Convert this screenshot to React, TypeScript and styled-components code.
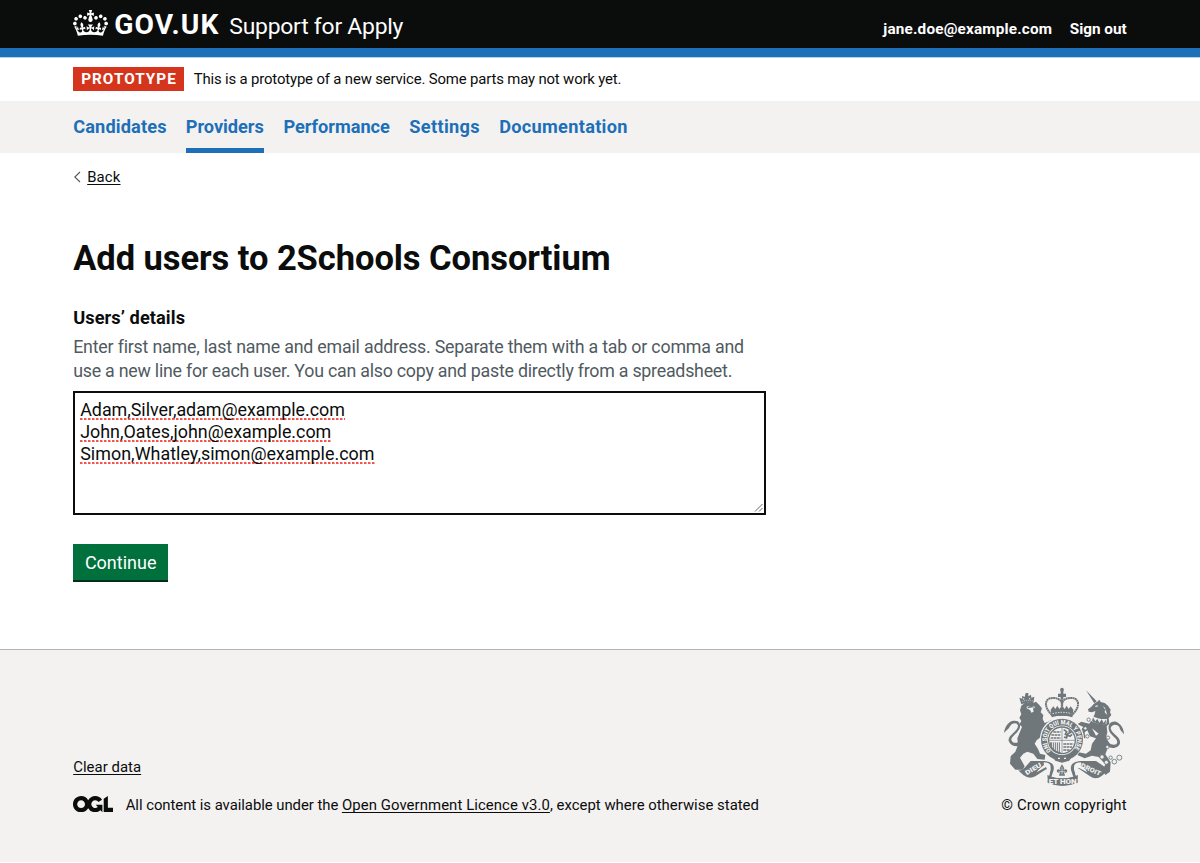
import React from "react";
import styled, { createGlobalStyle } from "styled-components";

const ink = "#0b0c0c";
const blue = "#1d70b8";
const grey = "#f3f2f1";
const secondary = "#505a5f";
const arms = "#6f777b";

const GlobalStyle = createGlobalStyle`
  *, *::before, *::after { box-sizing: border-box; }
  body {
    margin: 0;
    background: #fff;
    color: ${ink};
    font-family: Roboto, "Liberation Sans", sans-serif;
  }
`;

const Container = styled.div`
  width: 1053.5px;
  margin-left: 73.2px;
`;

/* Tracking differs slightly between strings, so it is a prop of the text. */
const Text = styled.span<{ $track?: number }>`
  letter-spacing: ${(p) => p.$track ?? 0}px;
`;

const Header = styled.header`
  height: 57px;
  background: ${ink};
  border-bottom: 9px solid ${blue};
  box-shadow: 0 1px 0 #b4d0e8;
  color: #fff;
`;

const HeaderRow = styled(Container)`
  display: flex;
  align-items: baseline;
  padding-top: 5px;
`;

const Crown = styled.svg`
  align-self: flex-start;
  width: 35px;
  height: 26px;
  margin: 5px 6px 0 0;
  fill: #fff;
`;

const Logotype = styled.span`
  font-size: 28.2px;
  font-weight: 700;
  line-height: 40px;
  letter-spacing: 1.15px;
  margin-right: 9.8px;
`;

const ServiceName = styled.span`
  flex: 1;
  font-size: 22.9px;
  letter-spacing: -0.24px;
`;

const AccountLink = styled.a`
  color: #fff;
  font-size: 15.3px;
  font-weight: 700;
  margin-left: 17.5px;
`;

const PhaseBanner = styled.div`
  height: 44px;
`;

const PhaseRow = styled(Container)`
  display: flex;
  align-items: center;
  padding-top: 10px;
  font-size: 14.9px;
  line-height: 24px;
`;

const Tag = styled.strong`
  width: 111px;
  height: 24px;
  margin-right: 9.5px;
  padding-left: 8px;
  background: #d4351c;
  color: #fff;
  font-size: 15.3px;
  letter-spacing: 1px;
`;

const PrimaryNav = styled.nav`
  height: 52px;
  background: ${grey};
`;

const NavList = styled(Container)`
  display: flex;
  gap: 19.3px;
`;

const NavLink = styled.a<{ $width: number; $active?: boolean; $track?: number }>`
  width: ${(p) => p.$width}px;
  height: 52px;
  border-bottom: ${(p) => (p.$active ? `5px solid ${blue}` : "0")};
  color: ${blue};
  font-size: 18.2px;
  font-weight: 700;
  line-height: 52px;
  white-space: nowrap;
  letter-spacing: ${(p) => p.$track ?? 0}px;
`;

const BackLink = styled.a`
  display: flex;
  align-items: center;
  gap: 6px;
  margin-top: 14px;
  height: 20px;
  font-size: 14.9px;
  line-height: 20px;
`;

const Underlined = styled.span<{ $track?: number }>`
  text-decoration: underline;
  text-decoration-thickness: 1px;
  text-underline-offset: 2px;
  text-decoration-skip-ink: none;
  letter-spacing: ${(p) => p.$track ?? 0}px;
`;

const Main = styled.main`
  height: 496px;
  padding-top: 0.1px;
`;

const Title = styled.h1`
  margin: 51px 0 0;
  font-size: 34.5px;
  line-height: 40px;
  letter-spacing: -0.06px;
`;

const Label = styled.label`
  display: block;
  margin-top: 28px;
  color: ${ink};
  font-size: 18.2px;
  font-weight: 700;
  line-height: 24px;
  letter-spacing: 0.08px;
`;

const Hint = styled.div`
  margin-top: 5px;
  color: ${secondary};
  font-size: 17.8px;
  line-height: 24px;
`;

const HintLine = styled.div<{ $track: number }>`
  white-space: nowrap;
  letter-spacing: ${(p) => p.$track}px;
`;

const TextBox = styled.div`
  position: relative;
  width: 693px;
  height: 124px;
  margin-top: 8px;
  padding: 5px;
  border: 2px solid ${ink};
  background: #fff;
  font-size: 17.9px;
  line-height: 22px;
`;

const Entry = styled.div`
  height: 22px;
  white-space: nowrap;
`;

const Misspelt = styled.span<{ $track: number }>`
  display: inline-block;
  height: 22px;
  line-height: 24px;
  letter-spacing: ${(p) => p.$track}px;
  background: radial-gradient(circle at 1.2px 1.2px, #f4534e 1.1px, #f4534e66 1.5px, transparent 1.8px) 0 100% / 4px 2.6px repeat-x;
`;

const ResizeGrip = styled.svg`
  position: absolute;
  right: 1px;
  bottom: 1px;
  width: 9px;
  height: 9px;
  stroke: #6b6b6b;
  stroke-width: 1;
`;

const Button = styled.button`
  display: block;
  width: 95px;
  height: 36px;
  margin: 29px 0 0;
  padding: 0;
  border: 0;
  background: #00703c;
  box-shadow: 0 2px 0 #002d18;
  color: #fff;
  font-family: inherit;
  font-size: 18px;
  line-height: 37px;
`;

const Footer = styled.footer`
  height: 213px;
  border-top: 1px solid #b1b4b6;
  background: ${grey};
  font-size: 14.9px;
  line-height: 20px;
`;

const FooterRow = styled(Container)`
  display: flex;
  justify-content: space-between;
  align-items: flex-end;
  height: 165px;
`;

const FooterMeta = styled.div`
  display: flex;
  flex-direction: column;
  gap: 18px;
`;

const Licence = styled.div`
  display: flex;
  align-items: center;
  white-space: pre;
`;

const OglLogo = styled.svg`
  width: 40px;
  height: 16.3px;
  margin: 0 12.5px 2px 0;
  fill: ${ink};
`;

const Copyright = styled.div`
  display: flex;
  flex-direction: column;
  align-items: flex-end;
  gap: 9px;
`;

const ArmsSvg = styled.svg`
  width: 124px;
  height: 99px;
  margin-right: 1px;
`;

const BackChevron = () => (
  <svg width="8" height="12" viewBox="0 0 8 12" fill="none" stroke={secondary} strokeWidth="1.1">
    <path d="M7 1L1.8 6L7 11" />
  </svg>
);

const CrownIcon = () => (
  <Crown viewBox="0 0 132 97" preserveAspectRatio="none">
    <path d="M25 30.2c3.5 1.5 7.7-.2 9.1-3.7 1.5-3.6-.2-7.8-3.9-9.2-3.6-1.4-7.6.3-9.1 3.9-1.4 3.5.3 7.5 3.9 9zM9 39.5c3.6 1.5 7.8-.2 9.2-3.7 1.5-3.6-.2-7.8-3.9-9.1-3.6-1.5-7.6.2-9.1 3.8-1.4 3.5.3 7.5 3.8 9zM4.4 57.2c3.5 1.5 7.7-.2 9.1-3.8 1.5-3.6-.2-7.7-3.9-9.1-3.5-1.5-7.6.3-9.1 3.8-1.4 3.5.3 7.6 3.9 9.1zm38.3-21.4c3.5 1.5 7.7-.2 9.1-3.8 1.5-3.6-.2-7.7-3.9-9.1-3.6-1.5-7.6.3-9.1 3.8-1.3 3.6.4 7.7 3.9 9.1zm64.4-5.6c-3.6 1.5-7.8-.2-9.1-3.7-1.5-3.6.2-7.8 3.8-9.2 3.6-1.4 7.7.3 9.2 3.9 1.3 3.5-.4 7.5-3.9 9zm15.9 9.3c-3.6 1.5-7.7-.2-9.1-3.7-1.5-3.6.2-7.8 3.7-9.1 3.6-1.5 7.7.2 9.2 3.8 1.5 3.5-.3 7.5-3.8 9zm4.7 17.7c-3.6 1.5-7.8-.2-9.2-3.8-1.5-3.6.2-7.7 3.9-9.1 3.6-1.5 7.7.3 9.2 3.8 1.3 3.5-.4 7.6-3.9 9.1zM89.3 35.8c-3.6 1.5-7.8-.2-9.2-3.8-1.4-3.6.2-7.7 3.9-9.1 3.6-1.5 7.7.3 9.2 3.8 1.4 3.6-.3 7.7-3.9 9.1zM69.7 17.7l8.9 4.7V9.3l-8.9 2.8c-.2-.3-.5-.6-.9-.9L72.4 0H59.6l3.5 11.2c-.3.3-.6.5-.9.9l-8.8-2.8v13.1l8.8-4.7c.3.3.6.7.9.9l-5 15.4v.1c-.2.8-.4 1.6-.4 2.4 0 4.1 3.1 7.5 7 8.1h.2c.3 0 .7.1 1 .1.4 0 .7 0 1-.1h.2c4-.6 7.1-4.1 7.1-8.1 0-.8-.1-1.7-.4-2.4V34l-5.1-15.4c.4-.2.7-.6 1-.9zM66 92.8c16.9 0 32.8 1.1 47.1 3.2 4-16.9 8.9-26.7 14-33.5l-9.6-3.4c1 4.9 1.1 7.2 0 10.2-1.5-1.4-3-4.3-4.2-8.7L108.6 76c2.8-2 5-3.2 7.5-3.3-4.4 9.4-10 11.9-13.6 11.2-4.3-.8-6.3-4.6-5.6-7.9 1-4.7 5.7-5.9 8-.5 4.3-8.7-3-11.4-7.6-8.8 7.1-7.2 7.9-13.5 2.1-21.1-8 6.1-8.1 12.3-4.5 20.8-4.7-5.4-12.1-2.5-9.5 6.2 3.4-5.2 7.9-2 7.2 3.1-.6 4.3-6.4 7.8-13.5 7.2-10.3-.9-10.9-8-11.2-13.8 2.5-.5 7.1 1.8 11 7.3L80.2 60c-4.1 4.4-8 5.3-12.3 5.4 1.4-4.4 8-11.6 8-11.6H55.5s6.4 7.2 7.9 11.6c-4.2-.1-8-1-12.3-5.4l1.4 16.4c3.9-5.5 8.5-7.7 10.9-7.3-.3 5.8-.9 12.8-11.1 13.8-7.2.6-12.9-2.9-13.5-7.2-.7-5 3.8-8.3 7.1-3.1 2.7-8.7-4.6-11.6-9.4-6.2 3.7-8.5 3.6-14.7-4.6-20.8-5.8 7.6-5 13.9 2.2 21.1-4.7-2.6-11.9.1-7.7 8.8 2.3-5.5 7.1-4.2 8.1.5.7 3.3-1.3 7.1-5.7 7.9-3.5.7-9-1.8-13.5-11.2 2.5.1 4.7 1.3 7.5 3.3l-4.7-15.4c-1.2 4.4-2.7 7.2-4.3 8.7-1.1-3-.9-5.3 0-10.2l-9.5 3.4c5 6.9 9.9 16.7 14 33.5 14.8-2.1 30.8-3.2 47.7-3.2z" />
  </Crown>
);

const RoyalArms = () => (
  <ArmsSvg viewBox="36 36 372 297" fill={arms} fontFamily="Roboto, sans-serif" fontWeight="900">
    {/* ribbon */}
    <path d="M84 286L100 300Q118 314 136 304L166 284Q182 276 178 300L172 322Q216 342 264 322L256 298Q250 276 268 282L300 304Q318 316 336 302L356 284L336 270L318 258L270 258Q236 262 244 288L250 306Q216 314 184 306L190 288Q198 262 164 258L122 258L104 278Q94 288 84 286Z" />
    <path d="M162 262Q186 262 182 284L178 300L168 276L140 292ZM272 262Q248 262 252 284L258 300L266 278L292 292Z" fill={grey} />
    <path d="M128 266L160 260L162 270L130 296L112 300L104 292ZM276 264L304 262L340 292L326 300L310 298L272 272Z" />
    {/* lion tail */}
    <path d="M100 210C80 218 62 214 56 198C52 180 84 170 84 152C82 142 66 142 60 154C56 164 48 166 42 174C44 158 52 144 66 138C82 134 92 142 90 156C88 172 64 182 64 194C66 206 82 206 98 196Z" />
    {/* lion */}
    <path d="M94 92L104 84L130 84L138 80L148 90L156 100L152 112L160 120L158 132L164 144L174 140L184 134L186 144L174 156L164 170L168 186L176 192L172 202L158 198L152 186L140 196L134 206L144 222L150 236L166 240L164 254L142 252L130 236L112 230L100 236L90 248L104 274L98 284L76 284L60 266L62 244L76 230L84 210L82 190L90 170L96 156L88 148L94 138L88 128L94 118L90 106Z" />
    <path d="M110 95Q116 91 121 98L124 98Q130 92 136 96L129 101L131 110L124 113L121 106L110 100ZM150 184L162 178L166 190L158 190Z" fill={grey} />
    <path d="M112 96L119 95L120 99L114 100ZM126 98L132 96L130 100Z" />
    {/* lion crown */}
    <path d="M94 88L88 68L97 71L96 62L104 66L107 54L115 54L115 64L123 59L124 68L133 65L130 86Q112 79 94 88Z" />
    <path d="M96 80Q112 73 128 78" stroke={grey} strokeWidth="2" fill="none" strokeDasharray="3 3" />
    <circle cx="101" cy="72" r="2" fill={grey} />
    <circle cx="119" cy="71" r="2" fill={grey} />
    {/* unicorn tail */}
    <path d="M352 214C370 226 392 214 390 200C388 182 364 176 362 160C364 148 380 146 388 156C390 166 396 170 402 178C402 160 392 146 378 140C362 138 354 148 356 162C358 180 382 188 382 202C380 212 366 212 354 202Z" />
    {/* unicorn horn, head and body */}
    <path d="M288 46L320 79L313 85Z" />
    <path d="M312 86L322 80L328 74L332 81L344 84L354 92L362 104L360 112L364 120L356 130L358 146L350 154L352 172L348 188L358 204L352 222L346 238L362 262L360 290L346 300L338 286L346 268L326 246L306 242L284 250L262 240L266 232L288 236L302 226L306 206L318 190L300 184L292 166L284 172L286 190L272 188L266 172L280 156L262 148L274 140L298 146L306 132L314 118L316 108L306 112L296 110L294 103L304 95Z" />
    <path d="M307 122Q324 134 351 132L349 147Q324 150 303 138Z" fill={grey} />
    <path d="M306 138L309 127L316 139L322 131L328 143L335 133L341 144L348 133L347 148Q324 150 306 138Z" />
    <path d="M315 93L323 91L324 94L317 96ZM338 92L346 100L344 112L352 120L348 108ZM306 160L326 176L318 182Z" fill={grey} />
    {/* chain */}
    <g fill={grey} stroke={arms} strokeWidth="2.6">
      <circle cx="296" cy="134" r="5" />
      <circle cx="286" cy="160" r="5" />
      <circle cx="292" cy="184" r="5" />
      <circle cx="354" cy="188" r="5" />
      <circle cx="352" cy="216" r="5" />
      <circle cx="336" cy="246" r="6.5" />
      <circle cx="349" cy="262" r="6" />
      <circle cx="362" cy="248" r="5" />
      <circle cx="373" cy="260" r="7" />
      <circle cx="388" cy="248" r="7.5" />
    </g>
    {/* crown over the shield */}
    <circle cx="216" cy="44" r="5.5" />
    <path d="M212 46H220V56H228V66H220V74H212V66H204V56H212Z" />
    <path d="M186 120C164 100 162 76 180 70C196 66 212 72 216 84C220 72 236 66 252 70C270 76 268 100 246 120Z" fill={grey} stroke={arms} strokeWidth="6" strokeDasharray="6 1" />
    <path d="M216 74V108" stroke={arms} strokeWidth="7" strokeDasharray="6 1" />
    <path d="M182 104L190 94L196 102L202 92L208 102L216 92L224 102L230 92L236 102L242 94L250 104L247 127Q216 116 185 127Z" />
    <path d="M188 116Q216 108 244 116" stroke={grey} strokeWidth="3" strokeDasharray="4 4" fill="none" />
    {/* garter */}
    <circle cx="216" cy="192" r="66" fill={grey} />
    <circle cx="216" cy="194" r="63" />
    <path id="garter" d="M184 227A46 46 0 1 1 248 227" fill="none" />
    <text fill={grey} fontSize="19">
      <textPath href="#garter" textLength="210" lengthAdjust="spacingAndGlyphs">ONI SOIT QUI MAL Y PENSE</textPath>
    </text>
    <circle cx="216" cy="196" r="44.5" fill={grey} />
    <circle cx="216" cy="196" r="40" fill="none" stroke={arms} strokeWidth="4" />
    <path d="M216 157V235M178 196H254" stroke={arms} strokeWidth="2" />
    <g stroke={arms} fill="none">
      <path d="M190 171H212M184 180H212M182 189H212M220 207H250M220 216H246M220 225H240" strokeWidth="5" strokeDasharray="8 1.5" />
      <path d="M221 164L230 170L226 178L240 184L246 178M236 166L242 172L234 176L228 190M222 186L232 190" strokeWidth="5" />
      <path d="M184 202V214M190 202V222M196 202V227M202 202V230M208 202V233" strokeWidth="3" />
      <path d="M182 202C180 216 190 230 212 234" strokeWidth="4" />
    </g>
    <path d="M186 244L216 240L246 244L238 257L216 263L196 257Z" />
    <path d="M204 250H210M222 250H228" stroke={grey} strokeWidth="4" />
    {/* fleur de lis */}
    <circle cx="216" cy="286" r="21" fill={grey} />
    <path d="M216 268L223 280L220 286Q230 278 232 288Q230 296 222 292L225 302H207L210 292Q202 296 200 288Q202 278 212 286L209 280Z" />
    <path d="M216 276V298M206 290H226" stroke={grey} strokeWidth="1.8" />
    {/* motto */}
    <path d="M172 300Q216 322 264 300L262 324Q216 340 174 324Z" />
    <text x="176" y="327" fill={grey} fontSize="21" textLength="84" lengthAdjust="spacingAndGlyphs">ET HON</text>
    <text transform="translate(110 301) rotate(-31)" fill={grey} fontSize="19" textLength="54" lengthAdjust="spacingAndGlyphs">DIEU</text>
    <text transform="translate(271 276) rotate(25)" fill={grey} fontSize="19" textLength="64" lengthAdjust="spacingAndGlyphs">DROIT</text>
  </ArmsSvg>
);

const navItems = [
  { label: "Candidates", width: 93.3, track: 0.13 },
  { label: "Providers", width: 78.3, track: -0.04, active: true },
  { label: "Performance", width: 106.7, track: -0.02 },
  { label: "Settings", width: 70.5, track: 0.3 },
  { label: "Documentation", width: 129, track: 0.29 },
];

const entries = [
  { text: "Adam,Silver,adam@example.com", track: -0.03 },
  { text: "John,Oates,john@example.com", track: -0.01 },
  { text: "Simon,Whatley,simon@example.com", track: 0.03 },
];

export default function App() {
  return (
    <>
      <GlobalStyle />
      <Header>
        <HeaderRow>
          <CrownIcon />
          <Logotype>GOV.UK</Logotype>
          <ServiceName>Support for Apply</ServiceName>
          <AccountLink><Text $track={0.18}>jane.doe@example.com</Text></AccountLink>
          <AccountLink>Sign out</AccountLink>
        </HeaderRow>
      </Header>
      <PhaseBanner>
        <PhaseRow>
          <Tag>PROTOTYPE</Tag>
          <Text $track={-0.15}>This is a prototype of a new service. Some parts may not work yet.</Text>
        </PhaseRow>
      </PhaseBanner>
      <PrimaryNav>
        <NavList>
          {navItems.map((item) => (
            <NavLink key={item.label} $width={item.width} $track={item.track} $active={item.active}>
              {item.label}
            </NavLink>
          ))}
        </NavList>
      </PrimaryNav>
      <Main>
        <Container>
          <BackLink>
            <BackChevron />
            <Underlined $track={0.15}>Back</Underlined>
          </BackLink>
          <Title>Add users to 2Schools Consortium</Title>
          <Label>Users’ details</Label>
          <Hint>
            <HintLine $track={-0.19}>Enter first name, last name and email address. Separate them with a tab or comma and</HintLine>
            <HintLine $track={-0.23}>use a new line for each user. You can also copy and paste directly from a spreadsheet.</HintLine>
          </Hint>
          <TextBox role="textbox" aria-multiline="true">
            {entries.map((entry) => (
              <Entry key={entry.text}>
                <Misspelt $track={entry.track}>{entry.text}</Misspelt>
              </Entry>
            ))}
            <ResizeGrip viewBox="0 0 9 9">
              <path d="M1 8.5L8.5 1M5 8.5L8.5 5" />
            </ResizeGrip>
          </TextBox>
          <Button>Continue</Button>
        </Container>
      </Main>
      <Footer>
        <FooterRow>
          <FooterMeta>
            <div><Underlined $track={0.04}>Clear data</Underlined></div>
            <Licence>
              <OglLogo viewBox="0 0 483.2 195.7">
                <path d="M421.5 142.8V.1l-50.7 32.3v161.1h112.4v-50.7zm-122.3-9.6A47.12 47.12 0 0 1 221 97.8c0-26 21.1-47.1 47.1-47.1 16.7 0 31.4 8.7 39.7 21.8l42.7-27.2A97.63 97.63 0 0 0 268.1 0c-36.5 0-68.3 20.1-85.1 49.7A98 98 0 0 0 97.8 0C43.9 0 0 43.9 0 97.8s43.9 97.8 97.8 97.8c36.5 0 68.3-20.1 85.1-49.7a97.76 97.76 0 0 0 149.6 25.4l19.4 22.2h3v-87.8h-80l24.3 27.5zM97.8 145c-26 0-47.1-21.1-47.1-47.1s21.1-47.1 47.1-47.1 47.1 21.1 47.1 47.1S123.8 145 97.8 145" />
              </OglLogo>
              <Text $track={-0.05}>All content is available under the </Text>
              <Underlined $track={0.08}>Open Government Licence v3.0</Underlined>
              <Text $track={0.01}>, except where otherwise stated</Text>
            </Licence>
          </FooterMeta>
          <Copyright>
            <RoyalArms />
            <Text $track={0.12}>© Crown copyright</Text>
          </Copyright>
        </FooterRow>
      </Footer>
    </>
  );
}
